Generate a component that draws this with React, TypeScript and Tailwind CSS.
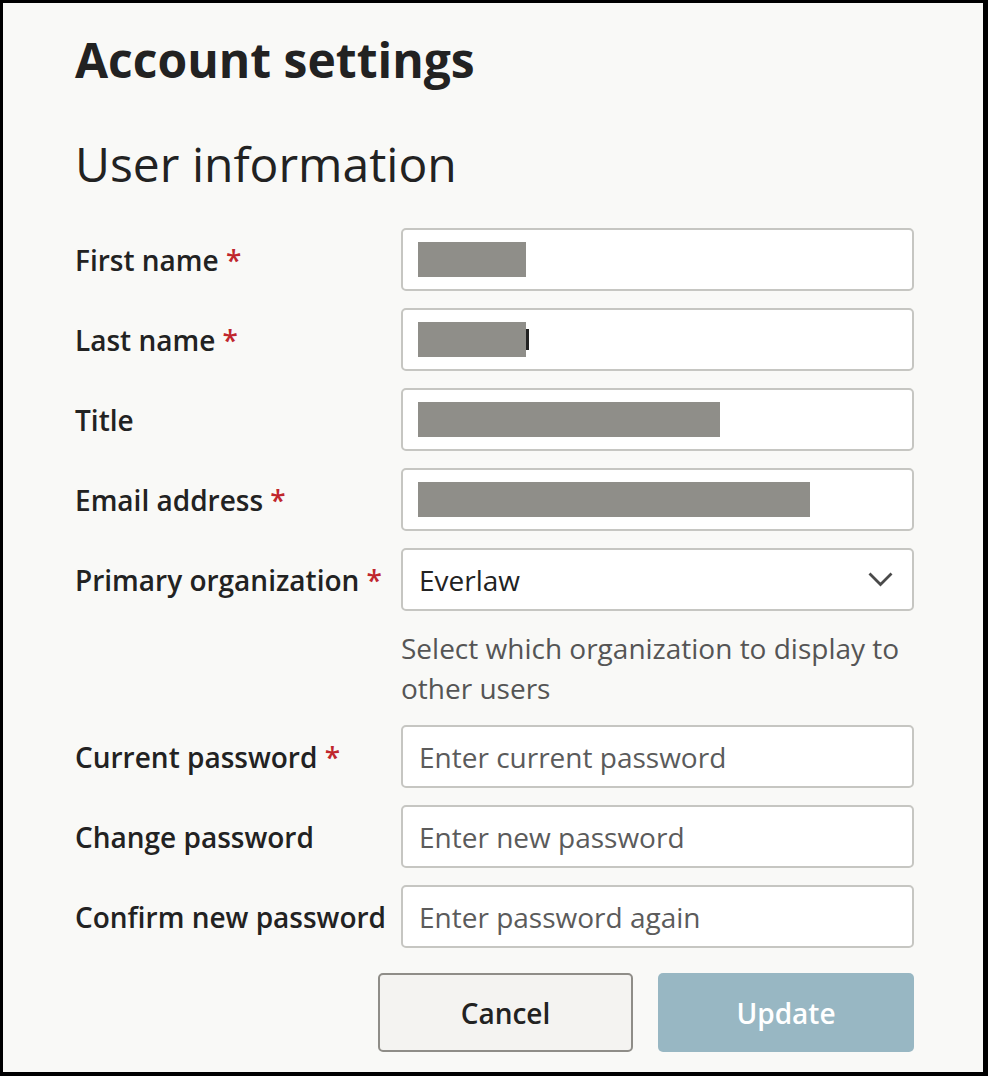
import { useState } from 'react'

const font = { fontFamily: '"Open Sans", "Noto Sans", sans-serif' }

function Label({ text, required }: { text: string; required?: boolean }) {
  return (
    <label className="text-[28px] font-semibold leading-[40px] text-[#222222] whitespace-nowrap">
      {text}
      {required && <span className="text-[#c0272d]"> *</span>}
    </label>
  )
}

// redacted value: grey bar over the field
function RedactedField({ width, tail }: { width: number; tail?: boolean }) {
  return (
    <div className="h-[63px] flex items-center border-2 border-[#c6c6c2] rounded-[5px] bg-white px-[15px]">
      <div className="h-[35px] bg-[#8f8e89]" style={{ width }} />
      {tail && <div className="w-[3px] h-[21px] bg-[#222222]" />}
    </div>
  )
}

function PasswordField({ placeholder }: { placeholder: string }) {
  const [value, setValue] = useState('')
  return (
    <input
      type="password"
      value={value}
      onChange={(e) => setValue(e.target.value)}
      placeholder={placeholder}
      className="h-[63px] w-full border-2 border-[#c6c6c2] rounded-[5px] bg-white px-[16px] text-[28px] text-[#222222] placeholder:text-[#5b5b5b] focus:outline-none"
      style={font}
    />
  )
}

export default function App() {
  return (
    <div
      className="box-border h-[1076px] border-black border-t-[3px] border-l-[3px] border-r-[5px] border-b-[4px] bg-[#f9f9f7] pl-[72px] pr-[69px] pt-[27px]"
      style={font}
    >
      <h1 className="text-[48px] font-bold leading-[60px] text-[#222222]">Account settings</h1>
      <h2 className="mt-[44px] text-[48px] font-normal leading-[60px] text-[#222222]">User information</h2>

      <div className="mt-[34px] grid grid-cols-[326px_1fr] items-center gap-y-[17px]">
        <Label text="First name" required />
        <RedactedField width={108} />

        <Label text="Last name" required />
        <RedactedField width={108} tail />

        <Label text="Title" />
        <RedactedField width={302} />

        <Label text="Email address" required />
        <RedactedField width={392} />

        <Label text="Primary organization" required />
        <div className="h-[63px] flex items-center justify-between border-2 border-[#c6c6c2] rounded-[5px] bg-white pl-[16px] pr-[19px] cursor-pointer">
          <span className="text-[28px] text-[#222222]">Everlaw</span>
          <svg width="25" height="15" viewBox="0 0 25 15" fill="none">
            <path d="M1.5 1.5 L12.5 12.5 L23.5 1.5" stroke="#4a4a4a" strokeWidth="2.8" />
          </svg>
        </div>

        <div />
        <p className="text-[28px] leading-[40px] text-[#555555]">
          Select which organization to display to other users
        </p>

        <Label text="Current password" required />
        <PasswordField placeholder="Enter current password" />

        <Label text="Change password" />
        <PasswordField placeholder="Enter new password" />

        <Label text="Confirm new password" />
        <PasswordField placeholder="Enter password again" />
      </div>

      <div className="mt-[25px] flex justify-end gap-[25px]">
        <button className="w-[255px] h-[79px] border-2 border-[#8f8d88] rounded-[5px] bg-[#f4f3f1] text-[28px] font-semibold text-[#222222]">
          Cancel
        </button>
        <button
          disabled
          className="w-[256px] h-[79px] rounded-[5px] bg-[#98b7c3] text-[28px] font-semibold text-white"
        >
          Update
        </button>
      </div>
    </div>
  )
}
